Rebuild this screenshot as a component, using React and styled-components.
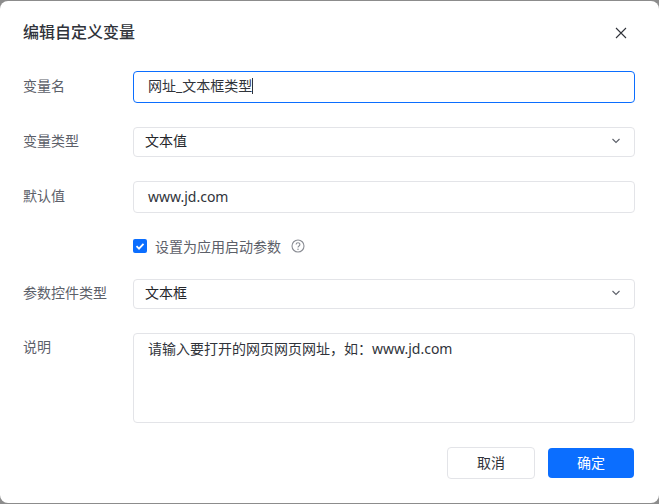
import React from 'react'
import styled, { createGlobalStyle } from 'styled-components'

const GlobalStyle = createGlobalStyle`
    html, body {
        margin : 0;
        padding : 0;
        width : 659px;
        height : 504px;
        overflow : hidden;
        background-color : #8c8c8c;
    }
    * {
        box-sizing : border-box;
    }
`;

const Dialog = styled.div`
    width : 659px;
    height : 502px;
    margin-top : 1px;
    padding : 0 24px 0 23px;
    background-color : #fff;
    border-radius : 8px;
    display : flex;
    flex-direction : column;
    font-family : "Noto Sans", "Noto Sans CJK SC", sans-serif;
`;

const Header = styled.div`
    height : 70px;
    padding-top : 17px;
    display : flex;
    justify-content : space-between;
    align-items : flex-start;
`;

const Title = styled.h1`
    margin : 0;
    font-size : 16px;
    line-height : 28px;
    font-weight : 500;
    color : #30333a;
`;

const CloseButton = styled.button`
    width : 14px;
    height : 14px;
    margin : 8px 7px 0 0;
    padding : 0;
    border : 0;
    background : none;
    display : flex;
`;

const Row = styled.div`
    display : flex;
    align-items : ${(p) => (p.$top ? 'flex-start' : 'center')};
    margin-bottom : ${(p) => p.$gap}px;
`;

const Label = styled.label`
    width : 110px;
    flex-shrink : 0;
    font-size : 14px;
    line-height : 20px;
    color : #5c6069;
    padding-top : ${(p) => (p.$top ? '4px' : '0')};
    padding-bottom : ${(p) => (p.$top ? '0' : '2px')};
`;

const Field = styled.div`
    width : 502px;
    height : ${(p) => p.$height}px;
    border : 1px solid ${(p) => (p.$focused ? '#0b6eff' : '#e3e4e8')};
    border-radius : 4px;
    background-color : #fff;
    display : flex;
    align-items : ${(p) => (p.$top ? 'flex-start' : 'center')};
    justify-content : space-between;
    padding : ${(p) => (p.$top ? '5px 14px' : p.$latin ? '0 14px' : '0 14px 2px')};
    font-size : 14px;
    line-height : 20px;
    color : #30333a;
`;

const SelectField = styled(Field)`
    padding : 0 14px 2px 11px;
    color : #24262b;
`;

const Caret = styled.span`
    width : 1px;
    height : 16px;
    background-color : #30333a;
`;

const InputText = styled.span`
    display : flex;
    align-items : center;
`;

const CheckRow = styled.div`
    display : flex;
    align-items : center;
    height : 14px;
    margin : 0 0 26px 110px;
    font-size : 14px;
    color : #5c6069;
`;

const CheckBox = styled.span`
    width : 14px;
    height : 14px;
    border-radius : 2px;
    background-color : #0b6eff;
    display : flex;
    margin-right : 8px;
`;

const HelpIcon = styled.svg`
    width : 14px;
    height : 14px;
    margin-left : 10px;
`;

const Footer = styled.div`
    display : flex;
    justify-content : flex-end;
    align-items : center;
    gap : 13px;
    padding-right : 1px;
    margin-top : 24px;
`;

const Button = styled.button`
    height : ${(p) => (p.$primary ? 30 : 32)}px;
    width : ${(p) => (p.$primary ? 86 : 88)}px;
    border : ${(p) => (p.$primary ? '0' : '1px solid #e3e4e8')};
    border-radius : 4px;
    padding : 0 0 2px;
    background-color : ${(p) => (p.$primary ? '#0b6eff' : '#fff')};
    color : ${(p) => (p.$primary ? '#fff' : '#30333a')};
    font-family : inherit;
    font-size : 14px;
`;

const Chevron = () => (
    <svg width="8" height="6" viewBox="0 0 8 6" fill="none">
        <path d="M0.5 1 L4 4.5 L7.5 1" stroke="#5c6069" strokeWidth="1.1" />
    </svg>
);

const App = () => {
    return (
        <>
            <GlobalStyle />
            <Dialog>
                <Header>
                    <Title>编辑自定义变量</Title>
                    <CloseButton aria-label="关闭">
                        <svg width="14" height="14" viewBox="0 0 14 14" fill="none">
                            <path d="M2 2 L12 12 M12 2 L2 12" stroke="#30333a" strokeWidth="1.1" />
                        </svg>
                    </CloseButton>
                </Header>
                <Row $gap={24}>
                    <Label>变量名</Label>
                    <Field $height={32} $focused>
                        <InputText>网址_文本框类型<Caret /></InputText>
                    </Field>
                </Row>
                <Row $gap={24}>
                    <Label>变量类型</Label>
                    <SelectField $height={30}>
                        文本值
                        <Chevron />
                    </SelectField>
                </Row>
                <Row $gap={26}>
                    <Label>默认值</Label>
                    <Field $height={32} $latin>www.jd.com</Field>
                </Row>
                <CheckRow>
                    <CheckBox>
                        <svg width="14" height="14" viewBox="0 0 14 14" fill="none">
                            <path d="M3.5 7.2 L6 9.6 L10.5 4.8" stroke="#fff" strokeWidth="1.8" />
                        </svg>
                    </CheckBox>
                    设置为应用启动参数
                    <HelpIcon viewBox="0 0 14 14" fill="none">
                        <circle cx="7" cy="7" r="6" stroke="#8a8d94" strokeWidth="1.1" />
                        <path d="M5.1 5.6 C5.1 3.2 8.9 3.2 8.9 5.6 C8.9 7 7 6.9 7 8.5" stroke="#8a8d94" strokeWidth="1.1" />
                        <circle cx="7" cy="10.2" r="0.75" fill="#8a8d94" />
                    </HelpIcon>
                </CheckRow>
                <Row $gap={24}>
                    <Label>参数控件类型</Label>
                    <SelectField $height={30}>
                        文本框
                        <Chevron />
                    </SelectField>
                </Row>
                <Row $top>
                    <Label $top>说明</Label>
                    <Field $height={90} $top>请输入要打开的网页网页网址，如：www.jd.com</Field>
                </Row>
                <Footer>
                    <Button>取消</Button>
                    <Button $primary>确定</Button>
                </Footer>
            </Dialog>
        </>
    )
};

export default App;
